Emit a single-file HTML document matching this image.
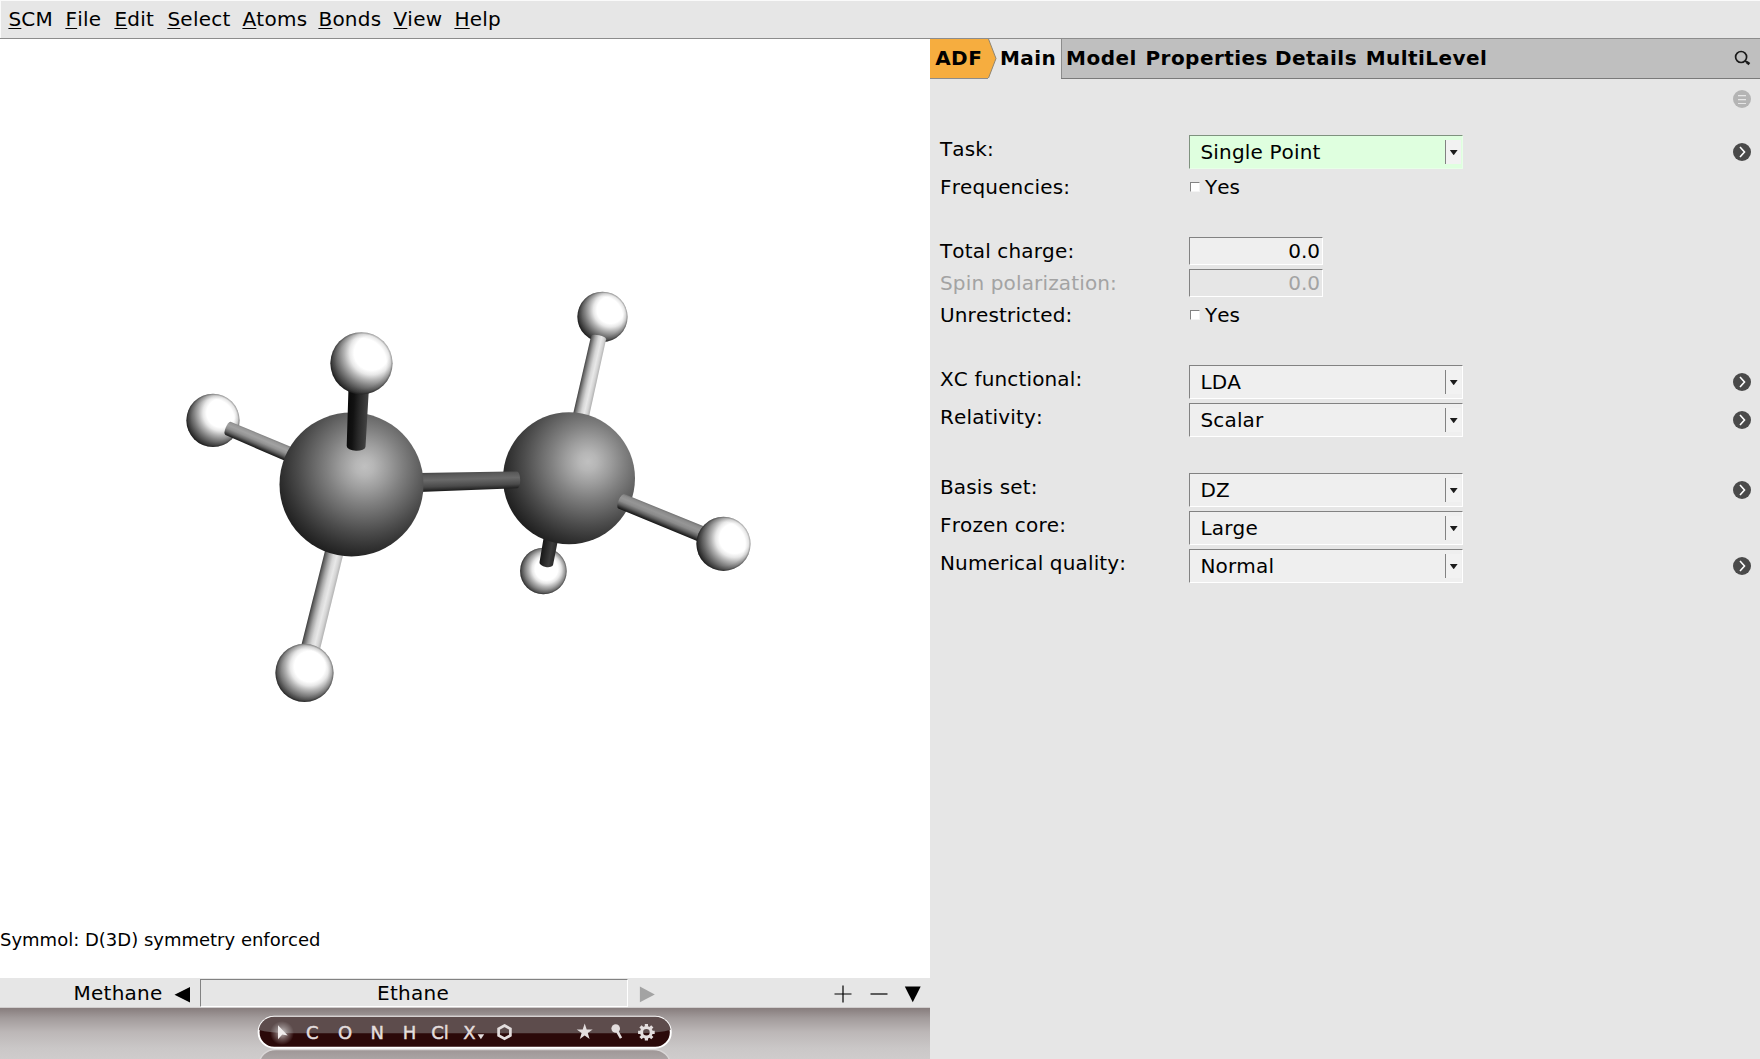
<!DOCTYPE html>
<html><head><meta charset="utf-8"><title>ADFinput</title>
<style>
html,body{margin:0;padding:0;}
body{width:1760px;height:1059px;overflow:hidden;background:#e6e6e6;font-family:"DejaVu Sans","Liberation Sans",sans-serif;font-size:20px;color:#000;position:relative;font-kerning:none;}
.abs{position:absolute;}
#menubar{left:0;top:0;width:1760px;height:38px;background:#e6e6e6;border-bottom:1px solid #8c8c8c;box-shadow:inset 1px 1px 0 #fafafa;}
#menubar span{position:absolute;top:7px;line-height:24px;white-space:nowrap;letter-spacing:.25px;margin-left:.4px;}
#menubar u{text-decoration-thickness:1px;text-underline-offset:2px;}
#view{left:0;top:39px;width:930px;height:939px;background:#fff;}
#status{left:0px;top:890px;font-size:18px;line-height:22px;white-space:nowrap;}
#molbar{left:0;top:978px;width:930px;height:30px;background:#e6e6e6;}
#toolbar{left:0;top:1007px;width:930px;height:52px;background:linear-gradient(#f4f4f4 0px,#887e7e 1.5px,#a29b9b 11px,#bcb7b7 25px,#cac7c7 41px,#cfcccc 52px);}
#tabbar{left:930px;top:39px;width:830px;height:39px;background:#bfbfbf;border-bottom:1px solid #7a7a7a;}
.tb{top:7px;line-height:24px;letter-spacing:.45px;white-space:nowrap;}
.lbl{position:absolute;left:940px;letter-spacing:.15px;line-height:24px;white-space:nowrap;}
.combo{position:absolute;left:1189px;width:272px;height:32px;background:#efefef;border:1px solid;border-color:#828282 #fff #fff #828282;}
.combo .t{position:absolute;left:10.500px;top:4px;line-height:24px;white-space:nowrap;letter-spacing:.15px;}
.combo .b{position:absolute;left:255px;top:4px;width:15px;height:24px;border-left:1px solid #828282;background:#f2f2f2;}
.combo .b:after{content:"";position:absolute;left:3.8px;top:9.9px;width:7.8px;height:5.4px;background:#1c1c1c;clip-path:polygon(0 0,100% 0,50% 100%);}
.entry{position:absolute;left:1189px;width:132px;height:26px;background:#efefef;border:1px solid;border-color:#828282 #fff #fff #828282;}
.entry .t{position:absolute;right:2px;top:1px;line-height:24px;}
.chk{position:absolute;left:1190px;width:8px;height:8px;background:#fff;border:1px solid;border-color:#828282 #f4f4f4 #f4f4f4 #828282;}
.yes{position:absolute;left:1205px;line-height:24px;}
.go{position:absolute;left:1732px;width:20px;height:20px;}
</style></head><body>
<div id="menubar" class="abs">
<span style="left:8px"><u>S</u>CM</span><span style="left:65px"><u>F</u>ile</span><span style="left:114px"><u>E</u>dit</span><span style="left:167px"><u>S</u>elect</span><span style="left:242px"><u>A</u>toms</span><span style="left:318px"><u>B</u>onds</span><span style="left:393px"><u>V</u>iew</span><span style="left:454px"><u>H</u>elp</span>
</div>
<div id="view" class="abs">
<!--MOLS--><svg class="abs" style="left:0;top:0" width="930" height="939" viewBox="0 39 930 939"><defs><radialGradient id="gH6" gradientUnits="userSpaceOnUse" cx="546.5" cy="569.0" r="30.0"><stop offset="0" stop-color="#ffffff"/><stop offset="0.38" stop-color="#ffffff"/><stop offset="0.48" stop-color="#e8e8e8"/><stop offset="0.6" stop-color="#b2b2b2"/><stop offset="0.72" stop-color="#828282"/><stop offset="0.84" stop-color="#565656"/><stop offset="0.94" stop-color="#383838"/><stop offset="1" stop-color="#282828"/></radialGradient><linearGradient id="bH6" gradientUnits="userSpaceOnUse" x1="544.3" y1="533.7" x2="558.7" y2="536.3"><stop offset="0" stop-color="#161616"/><stop offset="0.35" stop-color="#2a2a2a"/><stop offset="0.65" stop-color="#3c3c3c"/><stop offset="1" stop-color="#2a2a2a"/></linearGradient><radialGradient id="gH4" gradientUnits="userSpaceOnUse" cx="610.5" cy="310.0" r="35.6"><stop offset="0" stop-color="#ffffff"/><stop offset="0.38" stop-color="#ffffff"/><stop offset="0.48" stop-color="#e8e8e8"/><stop offset="0.6" stop-color="#b2b2b2"/><stop offset="0.72" stop-color="#828282"/><stop offset="0.84" stop-color="#565656"/><stop offset="0.94" stop-color="#383838"/><stop offset="1" stop-color="#282828"/></radialGradient><linearGradient id="bH4" gradientUnits="userSpaceOnUse" x1="590.7" y1="335.7" x2="606.5" y2="339.3"><stop offset="0" stop-color="#3c3c3c"/><stop offset="0.12" stop-color="#6a6a6a"/><stop offset="0.3" stop-color="#a6a6a6"/><stop offset="0.5" stop-color="#d6d6d6"/><stop offset="0.68" stop-color="#e8e8e8"/><stop offset="0.85" stop-color="#d4d4d4"/><stop offset="1" stop-color="#b0b0b0"/></linearGradient><radialGradient id="gC2" gradientUnits="userSpaceOnUse" cx="588.0" cy="461.5" r="91.4"><stop offset="0" stop-color="#c0c0c0"/><stop offset="0.1" stop-color="#b6b6b6"/><stop offset="0.25" stop-color="#9c9c9c"/><stop offset="0.4" stop-color="#808080"/><stop offset="0.55" stop-color="#666666"/><stop offset="0.7" stop-color="#4c4c4c"/><stop offset="0.85" stop-color="#343434"/><stop offset="1" stop-color="#1e1e1e"/></radialGradient><linearGradient id="bH5" gradientUnits="userSpaceOnUse" x1="618.2" y1="508.8" x2="624.4" y2="493.8"><stop offset="0" stop-color="#101010"/><stop offset="0.12" stop-color="#2c2c2c"/><stop offset="0.3" stop-color="#606060"/><stop offset="0.5" stop-color="#8a8a8a"/><stop offset="0.7" stop-color="#969696"/><stop offset="0.88" stop-color="#8c8c8c"/><stop offset="1" stop-color="#747474"/></linearGradient><radialGradient id="gH5" gradientUnits="userSpaceOnUse" cx="734.5" cy="538.5" r="39.3"><stop offset="0" stop-color="#ffffff"/><stop offset="0.38" stop-color="#ffffff"/><stop offset="0.48" stop-color="#e8e8e8"/><stop offset="0.6" stop-color="#b2b2b2"/><stop offset="0.72" stop-color="#828282"/><stop offset="0.84" stop-color="#565656"/><stop offset="0.94" stop-color="#383838"/><stop offset="1" stop-color="#282828"/></radialGradient><linearGradient id="bCC" gradientUnits="userSpaceOnUse" x1="419.3" y1="491.9" x2="418.7" y2="473.1"><stop offset="0" stop-color="#1a1a1a"/><stop offset="0.25" stop-color="#4a4a4a"/><stop offset="0.6" stop-color="#6a6a6a"/><stop offset="0.85" stop-color="#5a5a5a"/><stop offset="1" stop-color="#484848"/></linearGradient><radialGradient id="gH2" gradientUnits="userSpaceOnUse" cx="221.0" cy="413.0" r="37.5"><stop offset="0" stop-color="#ffffff"/><stop offset="0.38" stop-color="#ffffff"/><stop offset="0.48" stop-color="#e8e8e8"/><stop offset="0.6" stop-color="#b2b2b2"/><stop offset="0.72" stop-color="#828282"/><stop offset="0.84" stop-color="#565656"/><stop offset="0.94" stop-color="#383838"/><stop offset="1" stop-color="#282828"/></radialGradient><linearGradient id="bH2" gradientUnits="userSpaceOnUse" x1="225.3" y1="435.5" x2="231.3" y2="421.5"><stop offset="0" stop-color="#121212"/><stop offset="0.12" stop-color="#303030"/><stop offset="0.3" stop-color="#686868"/><stop offset="0.5" stop-color="#929292"/><stop offset="0.7" stop-color="#a2a2a2"/><stop offset="0.88" stop-color="#989898"/><stop offset="1" stop-color="#808080"/></linearGradient><linearGradient id="bH3" gradientUnits="userSpaceOnUse" x1="326.7" y1="542.7" x2="345.3" y2="547.3"><stop offset="0" stop-color="#3c3c3c"/><stop offset="0.12" stop-color="#6a6a6a"/><stop offset="0.3" stop-color="#a6a6a6"/><stop offset="0.5" stop-color="#d6d6d6"/><stop offset="0.68" stop-color="#e8e8e8"/><stop offset="0.85" stop-color="#d4d4d4"/><stop offset="1" stop-color="#b0b0b0"/></linearGradient><radialGradient id="gC1" gradientUnits="userSpaceOnUse" cx="364.5" cy="466.5" r="94.1"><stop offset="0" stop-color="#c0c0c0"/><stop offset="0.1" stop-color="#b6b6b6"/><stop offset="0.25" stop-color="#9c9c9c"/><stop offset="0.4" stop-color="#808080"/><stop offset="0.55" stop-color="#666666"/><stop offset="0.7" stop-color="#4c4c4c"/><stop offset="0.85" stop-color="#343434"/><stop offset="1" stop-color="#1e1e1e"/></radialGradient><radialGradient id="gH3" gradientUnits="userSpaceOnUse" cx="309.7" cy="666.5" r="40.3"><stop offset="0" stop-color="#ffffff"/><stop offset="0.38" stop-color="#ffffff"/><stop offset="0.48" stop-color="#e8e8e8"/><stop offset="0.6" stop-color="#b2b2b2"/><stop offset="0.72" stop-color="#828282"/><stop offset="0.84" stop-color="#565656"/><stop offset="0.94" stop-color="#383838"/><stop offset="1" stop-color="#282828"/></radialGradient><linearGradient id="bH1" gradientUnits="userSpaceOnUse" x1="348.5" y1="387.5" x2="368.9" y2="388.5"><stop offset="0" stop-color="#0a0a0a"/><stop offset="0.3" stop-color="#121212"/><stop offset="0.6" stop-color="#2a2a2a"/><stop offset="0.85" stop-color="#3a3a3a"/><stop offset="1" stop-color="#444444"/></linearGradient><radialGradient id="gH1" gradientUnits="userSpaceOnUse" cx="371.5" cy="353.0" r="45.5"><stop offset="0" stop-color="#ffffff"/><stop offset="0.38" stop-color="#ffffff"/><stop offset="0.48" stop-color="#e8e8e8"/><stop offset="0.6" stop-color="#b2b2b2"/><stop offset="0.72" stop-color="#828282"/><stop offset="0.84" stop-color="#565656"/><stop offset="0.94" stop-color="#383838"/><stop offset="1" stop-color="#282828"/></radialGradient><radialGradient id="rim"><stop offset=".8" stop-color="#000" stop-opacity="0"/><stop offset=".93" stop-color="#000" stop-opacity=".1"/><stop offset="1" stop-color="#000" stop-opacity=".38"/></radialGradient></defs>
<circle cx="543.4" cy="571.0" r="23.3" fill="url(#gH6)"/><circle cx="543.4" cy="571.0" r="23.3" fill="url(#rim)"/>
<path d="M544.3 533.7L539.5 562.3A6.9 3.5 -169.7 0 0 553.1 564.7L558.7 536.3Z" fill="url(#bH6)"/>
<circle cx="602.5" cy="316.8" r="25.1" fill="url(#gH4)"/><circle cx="602.5" cy="316.8" r="25.1" fill="url(#rim)"/>
<path d="M591.1 335.8L572.1 418.2L587.9 421.8L606.1 339.2A7.7 2.5 -167.3 0 0 591.1 335.8Z" fill="url(#bH4)"/>
<circle cx="569.0" cy="478.3" r="66.0" fill="url(#gC2)"/>
<path d="M618.3 508.6L701.9 543.1L708.1 528.1L624.3 494.0A7.9 3.0 112.3 0 0 618.3 508.6Z" fill="url(#bH5)"/>
<circle cx="723.5" cy="543.8" r="27.1" fill="url(#gH5)"/><circle cx="723.5" cy="543.8" r="27.1" fill="url(#rim)"/>
<path d="M419.3 491.9L517.4 488.2A8.4 3.0 88.4 0 0 517.0 471.4L418.7 473.1Z" fill="url(#bCC)"/>
<circle cx="213.0" cy="420.4" r="26.6" fill="url(#gH2)"/><circle cx="213.0" cy="420.4" r="26.6" fill="url(#rim)"/>
<path d="M225.5 435.1L289.0 462.5L295.0 448.5L231.1 421.9A7.2 3.0 113.0 0 0 225.5 435.1Z" fill="url(#bH2)"/>
<path d="M327.0 542.8L300.7 647.7L319.3 652.3L345.0 547.2Z" fill="url(#bH3)"/>
<circle cx="351.5" cy="484.4" r="72.0" fill="url(#gC1)"/>
<circle cx="304.5" cy="672.8" r="29.1" fill="url(#gH3)"/><circle cx="304.5" cy="672.8" r="29.1" fill="url(#rim)"/>
<path d="M348.5 387.5L346.7 445.9A9.4 4.5 -177.4 0 0 365.5 446.7L368.9 388.5Z" fill="url(#bH1)"/>
<circle cx="361.5" cy="363.3" r="31.1" fill="url(#gH1)"/><circle cx="361.5" cy="363.3" r="31.1" fill="url(#rim)"/>
</svg><!--MOLE-->
<div id="status" class="abs">Symmol: D(3D) symmetry enforced</div>
</div>
<div id="molbar" class="abs">
<div class="abs" style="left:73.500px;top:3px;line-height:24px;letter-spacing:.25px">Methane</div>
<svg class="abs" style="left:172px;top:6px" width="20" height="20" viewBox="0 0 20 20"><path d="M18 2.900V18.500L2.500 10.700Z" fill="#000"/></svg>
<div class="abs" style="left:200px;top:1px;width:426px;height:26px;border:1px solid;border-color:#828282 #fff #fff #828282;background:#e6e6e6"></div>
<div class="abs" style="left:377px;top:3px;line-height:24px;letter-spacing:.3px">Ethane</div>
<svg class="abs" style="left:637px;top:6px" width="20" height="20" viewBox="0 0 20 20"><path d="M2.900 2.600V18.300L17.800 10.450Z" fill="#a3a3a3"/></svg>
<svg class="abs" style="left:833px;top:6px" width="90" height="20" viewBox="0 0 90 20"><path d="M10 1.5V18.5M1.500 10H18.500" stroke="#000" stroke-width="1.2" fill="none"/><path d="M37.500 10H54.500" stroke="#000" stroke-width="1.2"/><path d="M71.800 2.600H87.700L79.750 18.300Z" fill="#000"/></svg>

</div>
<div id="toolbar" class="abs">
<svg class="abs" style="left:0;top:0;font-family:'DejaVu Sans','Liberation Sans',sans-serif" width="930" height="52" viewBox="0 1007 930 52">
<defs>
<clipPath id="pc"><rect x="258.600" y="1016.700" width="412.200" height="31" rx="15.500"/></clipPath>
<radialGradient id="glow"><stop offset="0" stop-color="#fff" stop-opacity=".7"/><stop offset=".5" stop-color="#fff" stop-opacity=".3"/><stop offset="1" stop-color="#fff" stop-opacity="0"/></radialGradient>
<linearGradient id="refl" x1="0" y1="0" x2="0" y2="1"><stop offset="0" stop-color="#9e9696"/><stop offset="1" stop-color="#b4aeae"/></linearGradient>
</defs>
<path d="M259 1066C259 1056 266 1049.500 276 1049.500H653C663 1049.500 670.500 1056 670.500 1066Z" fill="url(#refl)" stroke="#d9d6d6" stroke-width="1.500"/>
<rect x="258.600" y="1016.700" width="412.200" height="31" rx="15.500" fill="#2b0909" stroke="#fff" stroke-width="1.900"/>
<g clip-path="url(#pc)"><path d="M257 1029.500Q268 1033.200 292 1033.200H637Q661 1033.200 672 1029.500V1010H257Z" fill="#5d4c4c"/></g>
<circle cx="282" cy="1033" r="12" fill="url(#glow)" clip-path="url(#pc)"/>
<path d="M278 1025.300L287.700 1035.400L282.300 1034.600L278 1039.200Z" fill="#f1eded"/>
<g fill="#e3dddd" stroke="#e3dddd" stroke-width=".45" font-size="18" text-anchor="middle">
<text x="312.200" y="1038.700">C</text><text x="345.100" y="1038.700">O</text><text x="377.200" y="1038.700">N</text><text x="409.400" y="1038.700">H</text><text x="440" y="1038.700">Cl</text><text x="469.400" y="1038.700">X</text>
</g>
<path d="M477.600 1034.300H484.200L480.900 1039.200Z" fill="#e3dddd"/>
<path d="M504.500 1025.500L510.400 1028.800V1035.500L504.500 1038.800L498.600 1035.500V1028.800Z" fill="none" stroke="#e3dddd" stroke-width="2.700" stroke-linejoin="miter"/>
<path d="M584.700 1023.600L586.700 1029.500H592.700L587.800 1033.100L589.600 1039.100L584.700 1035.500L579.800 1039.100L581.600 1033.100L576.700 1029.500H582.700Z" fill="#e3dddd"/>
<circle cx="615.700" cy="1028.500" r="4.300" fill="#e3dddd"/><path d="M616.500 1030L621 1038.200" stroke="#e3dddd" stroke-width="2.600"/>
<g transform="translate(646.400,1032.300)"><circle r="4.800" fill="none" stroke="#e3dddd" stroke-width="3"/><g stroke="#e3dddd" stroke-width="3.200" fill="none"><path d="M0 -8.300V-5.500M0 8.300V5.500M-8.300 0H-5.500M8.300 0H5.500M-5.900 -5.900L-3.900 -3.900M5.900 5.900L3.900 3.900M-5.900 5.900L-3.900 3.900M5.900 -5.900L3.900 -3.900"/></g></g>
</svg>
</div>
<div id="tabbar" class="abs">
<svg class="abs" style="left:0;top:0" width="140" height="40" viewBox="0 0 140 40">
<rect x="58" y="0" width="73" height="40" fill="#e6e6e6"/>
<path d="M0 0H58.500L66 19.500L58.500 39H0Z" fill="#f6ad3f"/>
<path d="M58.500 0L66 19.500L58.500 39" fill="none" stroke="#8f8571" stroke-width="1"/>
<path d="M0 39.500H58" stroke="#8c8c8c" stroke-width="1"/>
<path d="M131.500 0V39" stroke="#8c8c8c" stroke-width="1"/>
</svg>
<b class="abs tb" style="left:5.200px">ADF</b>
<b class="abs tb" style="left:70px">Main</b>
<b class="abs tb" style="left:136.100px">Model</b>
<b class="abs tb" style="left:215.500px">Properties</b>
<b class="abs tb" style="left:345px">Details</b>
<b class="abs tb" style="left:435.700px">MultiLevel</b>
<svg class="abs" style="left:802px;top:9px" width="20" height="20" viewBox="0 0 20 20"><circle cx="9.100" cy="9" r="5.500" fill="none" stroke="#1a1a1a" stroke-width="1.700"/><path d="M13 12.800L15 14.300" stroke="#1a1a1a" stroke-width="1.800"/><path d="M14.600 14L17.400 16.200" stroke="#1a1a1a" stroke-width="2.800"/></svg>

</div>
<div class="lbl" style="top:137px">Task:</div>
<div class="lbl" style="top:175px">Frequencies:</div>
<div class="lbl" style="top:239px">Total charge:</div>
<div class="lbl" style="top:271px;color:#a3a3a3">Spin polarization:</div>
<div class="lbl" style="top:303px">Unrestricted:</div>
<div class="lbl" style="top:367px">XC functional:</div>
<div class="lbl" style="top:405px">Relativity:</div>
<div class="lbl" style="top:475px">Basis set:</div>
<div class="lbl" style="top:513px">Frozen core:</div>
<div class="lbl" style="top:551px">Numerical quality:</div>
<div class="combo" style="top:135px;background:#dfffdf;border-color:#7f927f #e8ffe8 #e8ffe8 #7f927f;"><span class="t">Single Point</span><span class="b"></span></div>
<div class="combo" style="top:365px;"><span class="t">LDA</span><span class="b"></span></div>
<div class="combo" style="top:403px;"><span class="t">Scalar</span><span class="b"></span></div>
<div class="combo" style="top:473px;"><span class="t">DZ</span><span class="b"></span></div>
<div class="combo" style="top:511px;"><span class="t">Large</span><span class="b"></span></div>
<div class="combo" style="top:549px;"><span class="t">Normal</span><span class="b"></span></div>
<div class="entry" style="top:237px"><span class="t">0.0</span></div>
<div class="entry" style="top:269px;background:#e6e6e6"><span class="t" style="color:#a3a3a3">0.0</span></div>
<div class="chk" style="top:182px"></div><div class="yes" style="top:175px">Yes</div>
<div class="chk" style="top:310px"></div><div class="yes" style="top:303px">Yes</div>
<svg class="go" style="top:142px" viewBox="0 0 20 20"><circle cx="10" cy="10" r="9" fill="#4a4a4a"/><path d="M8 5L12.5 10L8 15" fill="none" stroke="#fff" stroke-width="1.6"/></svg>
<svg class="go" style="top:372px" viewBox="0 0 20 20"><circle cx="10" cy="10" r="9" fill="#4a4a4a"/><path d="M8 5L12.5 10L8 15" fill="none" stroke="#fff" stroke-width="1.6"/></svg>
<svg class="go" style="top:410px" viewBox="0 0 20 20"><circle cx="10" cy="10" r="9" fill="#4a4a4a"/><path d="M8 5L12.5 10L8 15" fill="none" stroke="#fff" stroke-width="1.6"/></svg>
<svg class="go" style="top:480px" viewBox="0 0 20 20"><circle cx="10" cy="10" r="9" fill="#4a4a4a"/><path d="M8 5L12.5 10L8 15" fill="none" stroke="#fff" stroke-width="1.6"/></svg>
<svg class="go" style="top:556px" viewBox="0 0 20 20"><circle cx="10" cy="10" r="9" fill="#4a4a4a"/><path d="M8 5L12.5 10L8 15" fill="none" stroke="#fff" stroke-width="1.6"/></svg>
<svg class="go" style="top:89px" viewBox="0 0 20 20"><circle cx="10" cy="10" r="9" fill="#b4b4b4"/><path d="M6 6.700H14M6 10.600H14M6 14.500H14" stroke="#e6e6e6" stroke-width="1.200"/></svg>

</body></html>
